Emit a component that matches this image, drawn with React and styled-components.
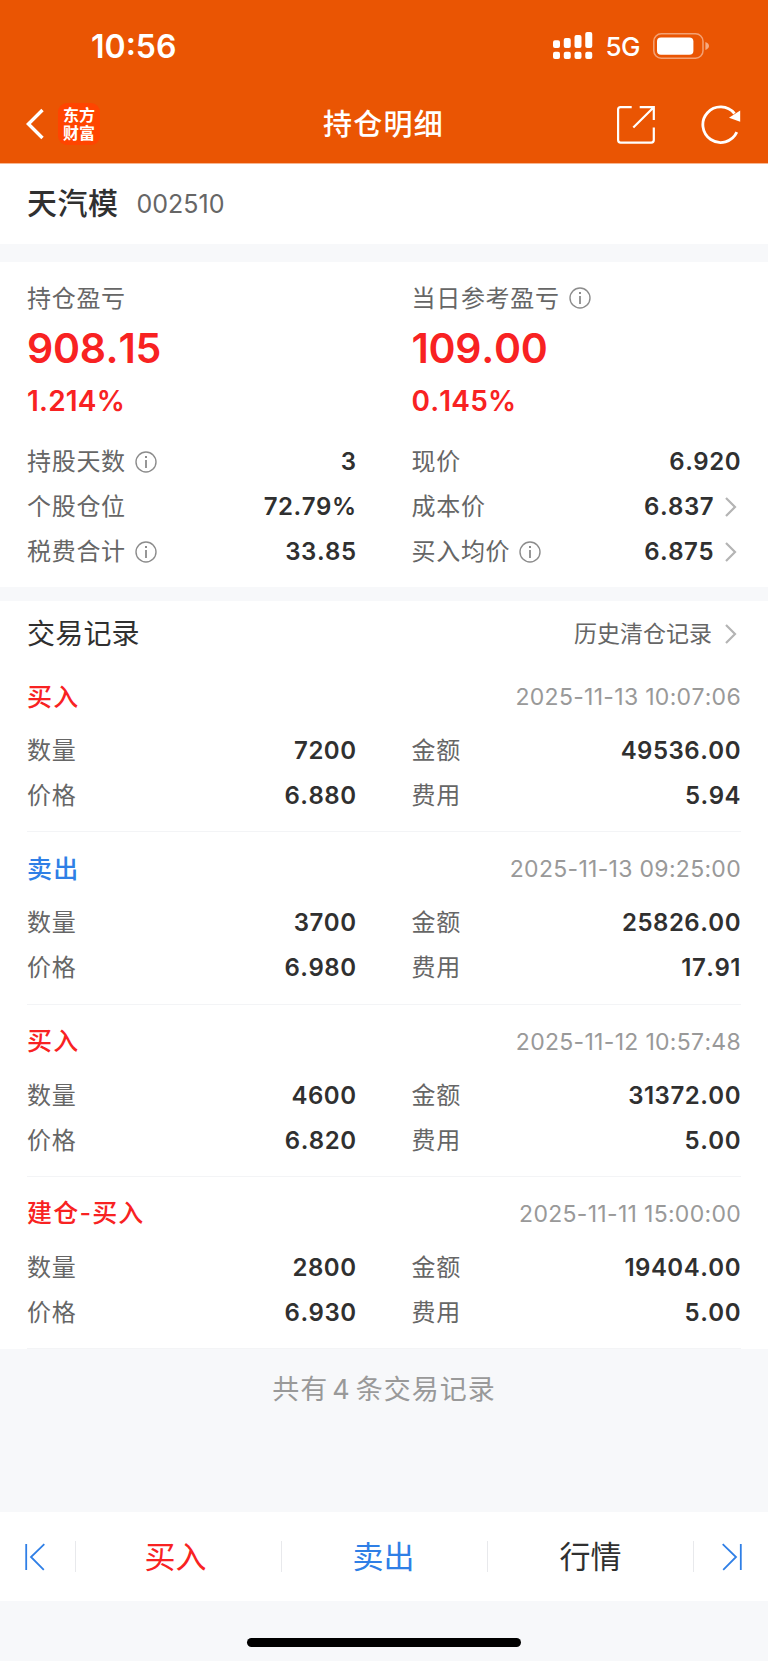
import React from "react";
import styled, { createGlobalStyle } from "styled-components";

const SUMMARY = [
    {
        title: "持仓盈亏",
        amount: "908.15",
        percent: "1.214%",
        rows: [
            { label: "持股天数", value: "3", info: true },
            { label: "个股仓位", value: "72.79%" },
            { label: "税费合计", value: "33.85", info: true },
        ],
    },
    {
        title: "当日参考盈亏",
        info: true,
        amount: "109.00",
        percent: "0.145%",
        rows: [
            { label: "现价", value: "6.920" },
            { label: "成本价", value: "6.837", link: true },
            { label: "买入均价", value: "6.875", info: true, link: true },
        ],
    },
];

const RECORDS = [
    { type: "买入", side: "buy", time: "2025-11-13 10:07:06", count: "7200", amount: "49536.00", price: "6.880", fee: "5.94" },
    { type: "卖出", side: "sell", time: "2025-11-13 09:25:00", count: "3700", amount: "25826.00", price: "6.980", fee: "17.91" },
    { type: "买入", side: "buy", time: "2025-11-12 10:57:48", count: "4600", amount: "31372.00", price: "6.820", fee: "5.00" },
    { type: "建仓-买入", side: "buy", time: "2025-11-11 15:00:00", count: "2800", amount: "19404.00", price: "6.930", fee: "5.00" },
];

const COLORS = {
    buy: "#f82222",
    sell: "#2f7fe6",
    text: "#303030",
};

function InfoIcon(){
    return (
        <svg width="22" height="22" viewBox="0 0 22 22" fill="none" stroke="#8c8c8c">
            <circle cx="11" cy="11" r="10" strokeWidth="1.4" />
            <path d="M11 9v8" strokeWidth="1.8" />
            <path d="M11 5v2" strokeWidth="2" />
        </svg>
    )
}

function ChevronIcon(){
    return (
        <svg width="12" height="20" viewBox="0 0 12 20" fill="none" stroke="#b4b4b4" strokeWidth="2.2">
            <path d="M1 1l9 9-9 9" />
        </svg>
    )
}

function SignalIcon(){
    const tops = [8.3, 6, 3, 0];

    return (
        <svg width="40" height="28" viewBox="0 0 40 28" fill="#fff">
            {
                tops.map((top, index) => (
                    <React.Fragment key={index}>
                        <rect x={index * 10.75} y={top} width="7" height={16 - top} rx="2" />
                        <rect x={index * 10.75} y="19.7" width="7" height="7.3" rx="2" />
                    </React.Fragment>
                ))
            }
        </svg>
    )
}

function BatteryIcon(){
    return (
        <svg width="57" height="27" viewBox="0 0 57 27" fill="none">
            <rect x="0.8" y="0.8" width="49.2" height="24.4" rx="7.5" stroke="#fff" strokeOpacity="0.45" strokeWidth="1.5" />
            <rect x="4" y="4.4" width="36.4" height="17.4" rx="4" fill="#fff" />
            <path d="M52.4 9c2.2.8 3.6 2.2 3.6 4s-1.4 3.2-3.6 4z" fill="#fff" fillOpacity="0.5" />
        </svg>
    )
}

function BackIcon(){
    return (
        <svg width="18" height="32" viewBox="0 0 18 32" fill="none" stroke="#fff" strokeWidth="3.4">
            <path d="M16.5 2L2.4 16l14.1 14" />
        </svg>
    )
}

function ShareIcon(){
    return (
        <svg width="38" height="38" viewBox="0 0 38 38" fill="none" stroke="#fff" strokeWidth="2.2">
            <path d="M14.7 1.1H3.6a2.5 2.5 0 0 0-2.5 2.5v30.5a2.5 2.5 0 0 0 2.5 2.5h30.7a2.5 2.5 0 0 0 2.5-2.5V21.5" />
            <path d="M22.7 1.1h14.1v13M36.5 1.5L16.3 21.5" />
        </svg>
    )
}

function RefreshIcon(){
    return (
        <svg width="40" height="40" viewBox="0 0 40 40" fill="none">
            <path d="M35.8 27.2A17.8 17.8 0 1 1 33.5 8.5" stroke="#fff" strokeWidth="2.8" />
            <path d="M28 12.7L39.2 5.5v11.2z" fill="#fff" />
        </svg>
    )
}

function SkipIcon(){
    return (
        <svg width="20" height="28" viewBox="0 0 20 28" fill="none" stroke="currentColor" strokeWidth="1.8">
            <path d="M1.2 1v26M19.3 1.2L6 14l12.8 12.8" />
        </svg>
    )
}

function Field({ label, value, info, link }){
    return (
        <FieldRow>
            <Label>{label}</Label>
            {info && <InfoIcon />}
            <Value>{value}</Value>
            {link && <LinkArrow><ChevronIcon /></LinkArrow>}
        </FieldRow>
    )
}

function Record({ type, side, time, count, amount, price, fee }){
    return (
        <RecordItem>
            <RecordHead>
                <RecordType $side={side}>{type}</RecordType>
                <Time>{time}</Time>
            </RecordHead>
            <Columns>
                <Field label="数量" value={count} />
                <Field label="金额" value={amount} />
                <Field label="价格" value={price} />
                <Field label="费用" value={fee} />
            </Columns>
        </RecordItem>
    )
}

function App(){
    return (
        <Page>
            <GlobalStyle />
            <Header>
                <StatusBar>
                    <Clock>10:56</Clock>
                    <SignalIcon />
                    <Network>5G</Network>
                    <BatteryIcon />
                </StatusBar>
                <NavBar>
                    <NavSide>
                        <BackIcon />
                        <Logo>东方<br />财富</Logo>
                    </NavSide>
                    <Title>持仓明细</Title>
                    <NavActions>
                        <ShareIcon />
                        <RefreshIcon />
                    </NavActions>
                </NavBar>
            </Header>

            <Stock>
                <StockName>天汽模</StockName>
                <StockCode>002510</StockCode>
            </Stock>

            <Summary>
                {
                    SUMMARY.map(({ title, info, amount, percent, rows }) => (
                        <div key={title}>
                            <SummaryTitle>
                                <Label>{title}</Label>
                                {info && <InfoIcon />}
                            </SummaryTitle>
                            <Amount>{amount}</Amount>
                            <Percent>{percent}</Percent>
                            {rows.map((row) => <Field key={row.label} {...row} />)}
                        </div>
                    ))
                }
            </Summary>

            <Records>
                <RecordsHead>
                    <RecordsTitle>交易记录</RecordsTitle>
                    <History>历史清仓记录</History>
                    <LinkArrow><ChevronIcon /></LinkArrow>
                </RecordsHead>
                {RECORDS.map((record) => <Record key={record.time} {...record} />)}
            </Records>

            <Total>共有<span>4</span>条交易记录</Total>

            <TabBar>
                <Skip><SkipIcon /></Skip>
                <Tab $color={COLORS.buy} $inset={6}>买入</Tab>
                <Tab $color={COLORS.sell} $inset={2}>卖出</Tab>
                <Tab $color={COLORS.text}>行情</Tab>
                <Skip $end><SkipIcon /></Skip>
            </TabBar>

            <HomeArea>
                <HomeIndicator />
            </HomeArea>
        </Page>
    )
}

const GlobalStyle = createGlobalStyle`
    *{
        box-sizing: border-box;
    }

    body{
        margin: 0;
        background-color: #f7f8fa;
        font-family: Inter, "Noto Sans CJK SC", sans-serif;
        font-kerning: none;
        color: ${COLORS.text};
    }

    svg{
        display: block;
        flex: none;
    }
`;

const Page = styled.div`
    display: flex;
    flex-direction: column;
    width: 768px;
    height: 1662px;
    overflow: hidden;
    white-space: nowrap;
`;

const Header = styled.header`
    height: 164px;
    background-color: #ea5503;
    border-bottom: 1px solid #f7b791;
    color: #fff;
`;

const StatusBar = styled.div`
    display: flex;
    align-items: center;
    height: 92px;
    padding: 0 58px 0 91px;
`;

const Clock = styled.span`
    margin-right: auto;
    font-size: 32px;
    font-weight: 600;
`;

const Network = styled.span`
    margin: 1px 13px 0 12px;
    font-size: 26px;
    font-weight: 500;
    letter-spacing: -0.5px;
`;

const NavBar = styled.div`
    display: grid;
    grid-template-columns: 1fr auto 1fr;
    align-items: center;
    height: 64px;
    padding: 0 27px 0 26px;
`;

const NavSide = styled.div`
    display: flex;
    align-items: center;
    gap: 14px;
`;

const Logo = styled.span`
    width: 42px;
    height: 42px;
    padding-top: 3px;
    border-radius: 9px;
    background-color: #ff4400;
    font-size: 16px;
    font-weight: 700;
    line-height: 18px;
    text-align: center;
`;

const Title = styled.h1`
    margin: 2px 0 0;
    font-size: 29px;
    font-weight: 500;
    letter-spacing: 1.2px;
    line-height: 44px;
`;

const NavActions = styled.div`
    display: flex;
    align-items: center;
    justify-content: flex-end;
    gap: 46px;
    padding-top: 1px;
`;

const Stock = styled.section`
    display: flex;
    align-items: center;
    height: 80px;
    padding: 0 0 1px 27px;
    background-color: #fff;
`;

const StockName = styled.h2`
    margin: 0 18px 5px 0;
    font-size: 30px;
    font-weight: 500;
    letter-spacing: 0.5px;
`;

const StockCode = styled.span`
    color: #666;
    font-size: 25px;
`;

const Columns = styled.div`
    display: grid;
    grid-template-columns: 1fr 1fr;
    column-gap: 55px;
`;

const Summary = styled(Columns)`
    height: 325px;
    margin: 18px 0 14px;
    padding: 15px 27px 0;
    background-color: #fff;
`;

const FieldRow = styled.div`
    display: flex;
    align-items: center;
    height: 45px;

    > svg{
        margin-left: 9px;
    }
`;

const SummaryTitle = styled(FieldRow)`
    height: 42px;
    margin-bottom: 2px;
`;

const Label = styled.span`
    margin-bottom: 4px;
    color: #666;
    font-size: 24px;
    letter-spacing: 0.7px;
`;

const Value = styled.span`
    margin-left: auto;
    font-size: 24px;
    font-weight: 600;
    letter-spacing: 0.5px;
`;

const LinkArrow = styled.span`
    margin: 0 4px 0 11px;
`;

const Amount = styled.div`
    color: ${COLORS.buy};
    font-size: 41px;
    font-weight: 600;
    letter-spacing: -0.3px;
    line-height: 54px;
`;

const Percent = styled.div`
    margin-bottom: 12px;
    color: ${COLORS.buy};
    font-size: 28px;
    font-weight: 600;
    letter-spacing: 0.2px;
    line-height: 52px;
`;

const Records = styled.section`
    padding: 0 27px;
    background-color: #fff;
`;

const RecordsHead = styled.div`
    display: flex;
    align-items: center;
    height: 59px;
    padding-top: 7px;
`;

const RecordsTitle = styled.h2`
    margin: 0 auto 4px 0;
    font-size: 28px;
    font-weight: 400;
    letter-spacing: 0.2px;
`;

const History = styled.span`
    margin: 0 2px 5px 0;
    color: #666;
    font-size: 23px;
`;

const RecordItem = styled.article`
    height: 172.25px;
    padding-top: 15px;
    border-bottom: 1px solid #f3f4f6;
`;

const RecordHead = styled.div`
    display: flex;
    align-items: center;
    justify-content: space-between;
    height: 44px;
    margin-bottom: 9px;
`;

const RecordType = styled.span`
    margin-bottom: 5px;
    color: ${({ $side }) => COLORS[$side]};
    font-size: 25px;
    font-weight: 500;
    letter-spacing: 1.2px;
`;

const Time = styled.span`
    color: #999;
    font-size: 23px;
    letter-spacing: 0.3px;
`;

const Total = styled.p`
    flex: 1;
    margin: 0;
    padding-top: 21px;
    color: #999;
    font-size: 27px;
    letter-spacing: 1px;
    line-height: 40px;
    text-align: center;

    span{
        margin: 0 5px 0 4px;
    }
`;

const TabBar = styled.nav`
    display: grid;
    grid-template-columns: 75px repeat(3, 1fr) 75px;
    align-items: center;
    height: 89px;
    background-color: #fff;
`;

const Tab = styled.a`
    padding-right: ${({ $inset = 0 }) => $inset}px;
    border-left: 1px solid #e8e9ec;
    color: ${({ $color }) => $color};
    font-size: 31px;
    line-height: 31px;
    text-align: center;
`;

const Skip = styled.a`
    display: flex;
    align-items: center;
    height: 31px;
    padding-left: 25px;
    color: ${COLORS.sell};

    ${({ $end }) => $end && `
        padding-left: 28px;
        border-left: 1px solid #e8e9ec;

        svg{
            transform: scaleX(-1);
        }
    `}
`;

const HomeArea = styled.div`
    height: 61px;
    padding-top: 37px;
    border-bottom: 1px solid #fff;
`;

const HomeIndicator = styled.div`
    width: 274px;
    height: 9px;
    margin: 0 auto;
    border-radius: 5px;
    background-color: #000;
`;

export default App;
